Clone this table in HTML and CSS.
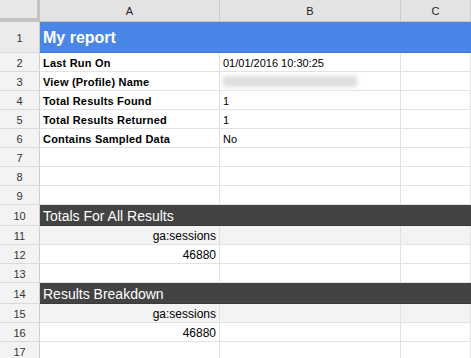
FILE: index.html
```html
<!DOCTYPE html>
<html>
<head>
<meta charset="utf-8">
<link rel="stylesheet" href="styles.css">
</head>
<body>
<div class="sheet">
  <div class="row colhead">
    <div class="rn corner"></div>
    <div class="c ca ch">A</div>
    <div class="c cb ch">B</div>
    <div class="c cc ch">C</div>
  </div>
  <div class="row r-title">
    <div class="rn">1</div>
    <div class="c span title">My report</div>
  </div>
  <div class="row"><div class="rn">2</div><div class="c ca lbl">Last Run On</div><div class="c cb">01/01/2016 10:30:25</div><div class="c cc"></div></div>
  <div class="row"><div class="rn">3</div><div class="c ca lbl">View (Profile) Name</div><div class="c cb"><span class="blur"></span></div><div class="c cc"></div></div>
  <div class="row"><div class="rn">4</div><div class="c ca lbl">Total Results Found</div><div class="c cb">1</div><div class="c cc"></div></div>
  <div class="row"><div class="rn">5</div><div class="c ca lbl">Total Results Returned</div><div class="c cb">1</div><div class="c cc"></div></div>
  <div class="row"><div class="rn">6</div><div class="c ca lbl">Contains Sampled Data</div><div class="c cb">No</div><div class="c cc"></div></div>
  <div class="row"><div class="rn">7</div><div class="c ca"></div><div class="c cb"></div><div class="c cc"></div></div>
  <div class="row"><div class="rn">8</div><div class="c ca"></div><div class="c cb"></div><div class="c cc"></div></div>
  <div class="row"><div class="rn">9</div><div class="c ca"></div><div class="c cb"></div><div class="c cc"></div></div>
  <div class="row r-sec"><div class="rn">10</div><div class="c span sec">Totals For All Results</div></div>
  <div class="row r-hd"><div class="rn">11</div><div class="c ca num">ga:sessions</div><div class="c cb"></div><div class="c cc"></div></div>
  <div class="row"><div class="rn">12</div><div class="c ca num">46880</div><div class="c cb"></div><div class="c cc"></div></div>
  <div class="row"><div class="rn">13</div><div class="c ca"></div><div class="c cb"></div><div class="c cc"></div></div>
  <div class="row r-sec"><div class="rn">14</div><div class="c span sec">Results Breakdown</div></div>
  <div class="row r-hd"><div class="rn">15</div><div class="c ca num">ga:sessions</div><div class="c cb"></div><div class="c cc"></div></div>
  <div class="row"><div class="rn">16</div><div class="c ca num">46880</div><div class="c cb"></div><div class="c cc"></div></div>
  <div class="row"><div class="rn">17</div><div class="c ca"></div><div class="c cb"></div><div class="c cc"></div></div>
</div>
</body>
</html>
```
FILE: styles.css
```css
* { box-sizing: border-box; }
html, body { margin: 0; padding: 0; background: #fff; }
body { font-family: "Liberation Sans", Arial, sans-serif; font-size: 11px; color: #000; overflow: hidden; }
.sheet { width: 471px; }
.row { display: flex; height: 19px; }
.rn {
  width: 40px; flex: none;
  background: #f3f3f3;
  border-right: 1px solid #cfcfcf;
  border-bottom: 1px solid #dadada;
  color: #333;
  font-size: 11px;
  padding-top: 1px;
  display: flex; align-items: center; justify-content: center;
}
.c {
  flex: none;
  border-right: 1px solid #e2e2e2;
  border-bottom: 1px solid #e2e2e2;
  display: flex; align-items: center;
  padding: 1px 3px 0;
  white-space: nowrap; overflow: hidden;
}
.ca { width: 180px; }
.cb { width: 181px; }
.cc { width: 70px; }
.span { width: 431px; border-right: none; }
.colhead { height: 22px; }
.colhead .rn { background: #e8e8e8; border-right: 3px solid #c4c4c4; border-bottom: 4px solid #c4c4c4; }
.ch {
  background: #e3e3e3;
  border-right: 1px solid #cccccc;
  border-bottom: 1px solid #c4c4c4;
  justify-content: center;
  color: #222;
  font-size: 11px;
}
.r-title { height: 31px; }
.r-title .rn { background: #ebebeb; }
.title {
  background: #4a86e8;
  color: #fff;
  font-weight: bold;
  font-size: 16px;
  border-bottom: 1px solid #3d78d8;
}
.lbl { font-weight: bold; letter-spacing: 0.2px; }
.r-sec { height: 21px; }
.sec {
  background: #434343;
  color: #fff;
  font-size: 14px;
  border-bottom: 1px solid #3a3a3a;
}
.r-hd .c { background: #f3f3f3; }
.num { justify-content: flex-end; font-size: 12px; }
.blur {
  display: block;
  width: 134px; height: 11px;
  background: #dedede;
  filter: blur(2px);
}
```
